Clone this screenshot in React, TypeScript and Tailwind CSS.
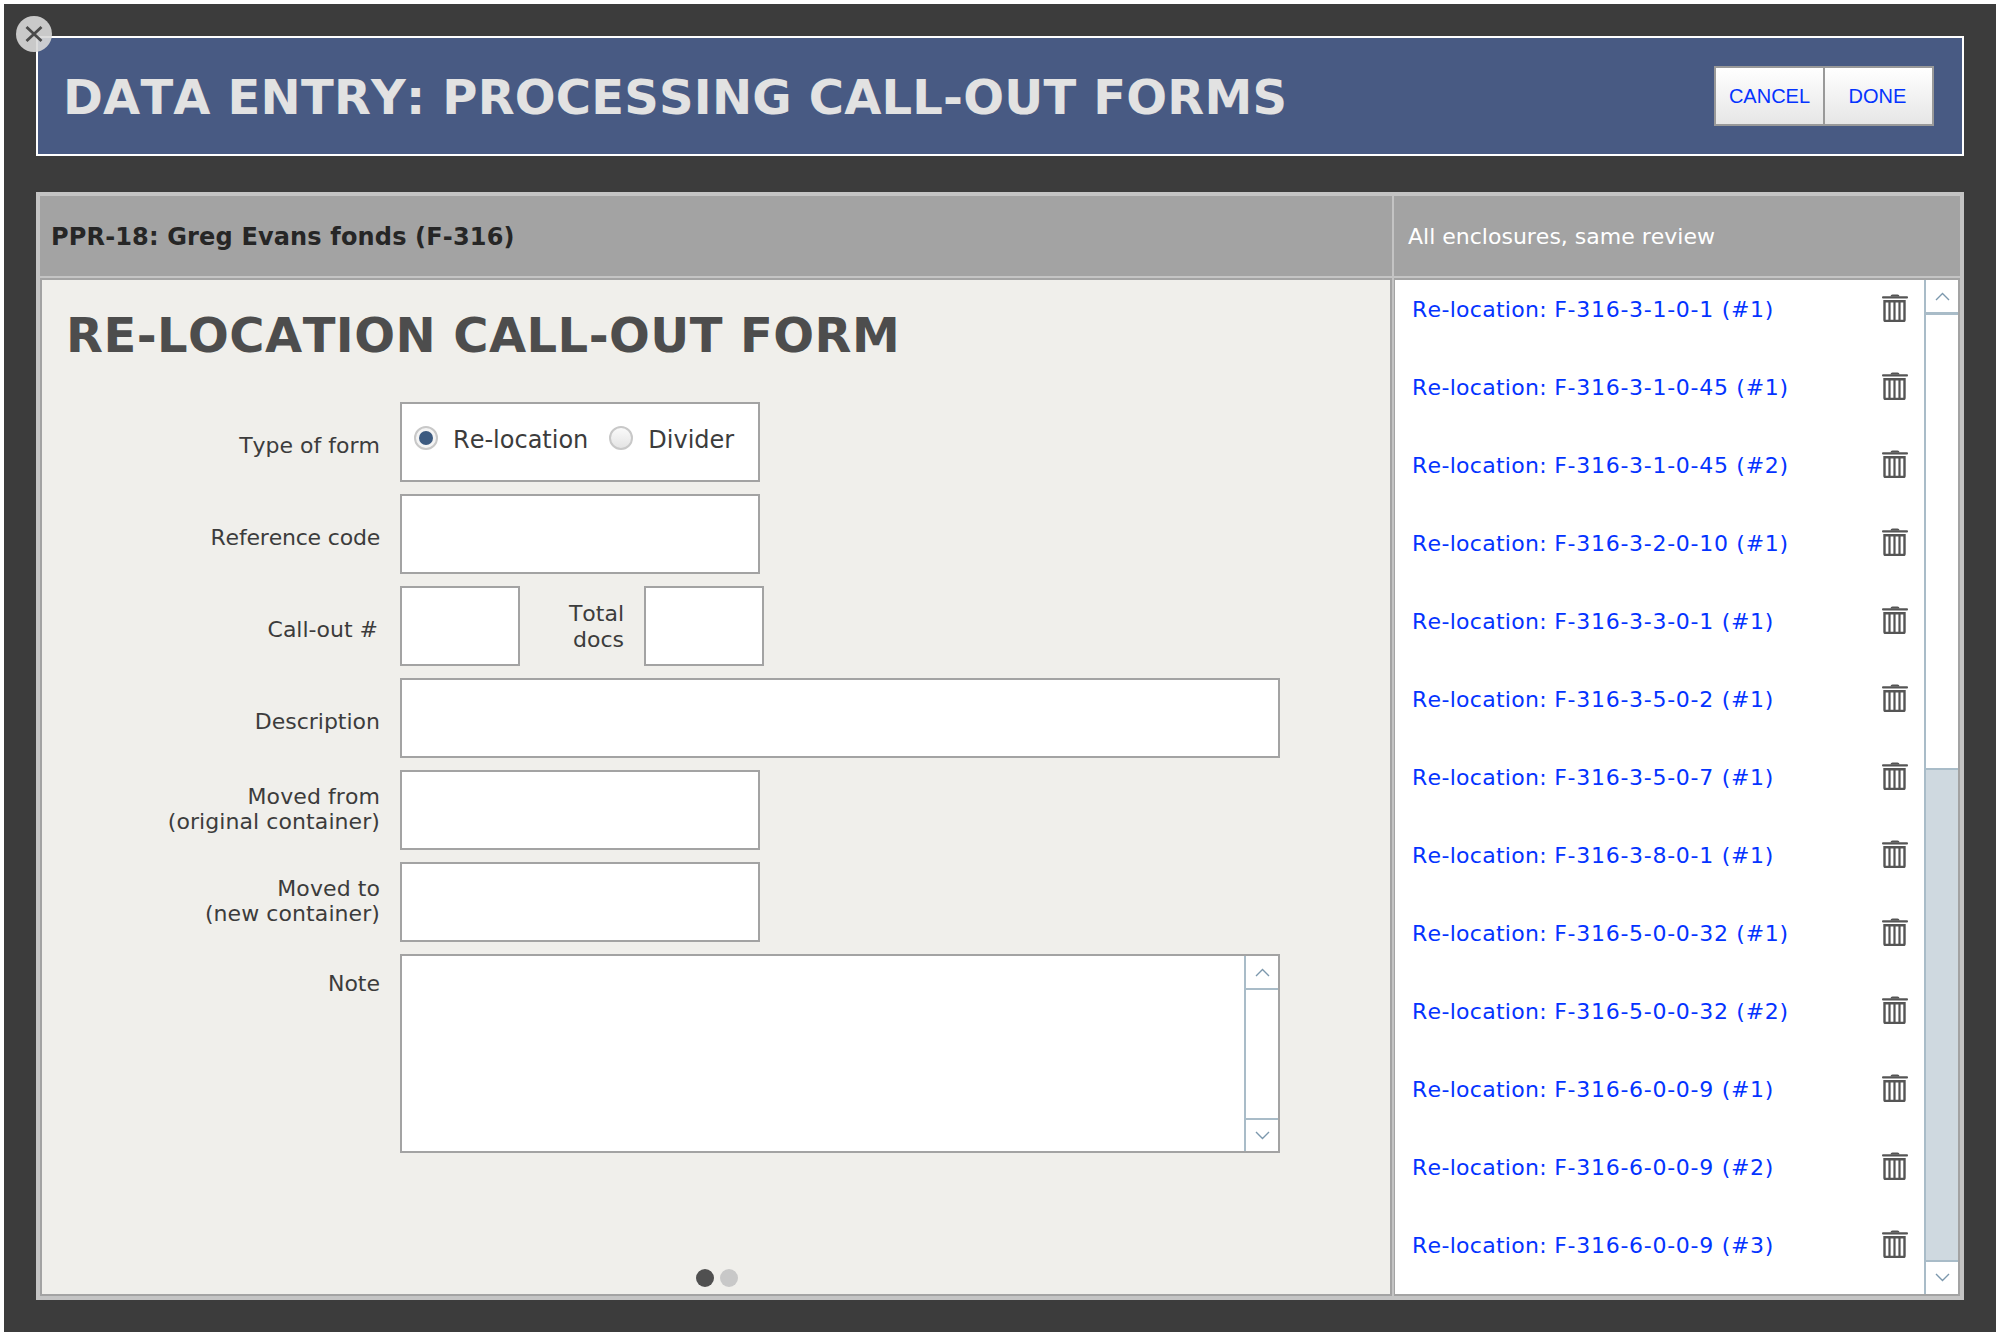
import React from "react";

const rows = [
  "F-316-3-1-0-1 (#1)", "F-316-3-1-0-45 (#1)", "F-316-3-1-0-45 (#2)", "F-316-3-2-0-10 (#1)",
  "F-316-3-3-0-1 (#1)", "F-316-3-5-0-2 (#1)", "F-316-3-5-0-7 (#1)", "F-316-3-8-0-1 (#1)",
  "F-316-5-0-0-32 (#1)", "F-316-5-0-0-32 (#2)", "F-316-6-0-0-9 (#1)", "F-316-6-0-0-9 (#2)", "F-316-6-0-0-9 (#3)",
];

function Trash() {
  return (
    <svg width="26" height="28" viewBox="0 0 26 28" className="shrink-0">
      <path d="M8.5 2.5 Q8.5 0.5 10.5 0.5 H15.5 Q17.5 0.5 17.5 2.5 Z" fill="#555" />
      <rect x="0" y="2.2" width="26" height="2.4" rx="1" fill="#555" />
      <path d="M2.5 7.2 H22.5 V26 Q22.5 27 21.5 27 H3.5 Q2.5 27 2.5 26 Z" fill="none" stroke="#555" strokeWidth="2.4" />
      <path d="M7.5 7 V27 M12.5 7 V27 M17.5 7 V27" stroke="#555" strokeWidth="2.2" fill="none" />
    </svg>
  );
}

function Chevron({ up }: { up?: boolean }) {
  return (
    <svg width="15" height="9" viewBox="0 0 15 9">
      <path d={up ? "M1 8 L7.5 1.5 L14 8" : "M1 1 L7.5 7.5 L14 1"} fill="none" stroke="#7c98ad" strokeWidth="1.4" />
    </svg>
  );
}

function Label({ children, className = "" }: { children: React.ReactNode; className?: string }) {
  return <div className={"w-[333px] pr-[20px] text-right text-[22px] leading-[25.5px] text-[#3c3c3c] " + className}>{children}</div>;
}

const box = "h-[80px] border-2 border-[#a3a3a3] bg-white";

export default function App() {
  return (
    <div className="min-h-[1336px] bg-white p-[4px] font-['DejaVu_Sans',sans-serif] [font-kerning:none]">
      <div className="relative h-[1328px] bg-[#3c3c3c] px-[32px] pt-[32px]">
        <div className="absolute left-[12px] top-[12px] z-10 flex h-[36px] w-[36px] items-center justify-center rounded-full bg-[#d8d8d8]/90">
          <svg width="18" height="18" viewBox="0 0 18 18"><path d="M1.5 2 L16.5 16 M16.5 2 L1.5 16" stroke="#4a4a4a" strokeWidth="2.8" /></svg>
        </div>

        <div className="flex h-[120px] items-center justify-between border-2 border-white bg-[#485a83] pl-[25px] pr-[28px]">
          <div className="pt-[2px] text-[48px] font-bold leading-none tracking-[0.2px] text-[#e2e2e2]">DATA ENTRY: PROCESSING CALL-OUT FORMS</div>
          <div className="flex h-[60px] border-2 border-[#999999] bg-gradient-to-b from-white to-[#e6e6e6] font-['Liberation_Sans',sans-serif] text-[20px] text-[#0433ff]">
            <div className="flex w-[107px] items-center justify-center">CANCEL</div>
            <div className="flex w-[109px] items-center justify-center border-l-2 border-[#999999] pr-[2px]">DONE</div>
          </div>
        </div>

        <div className="mt-[36px] flex h-[1108px] border-4 border-[#c4c4c4] bg-[#c4c4c4]">
          <div className="flex w-[1352px] flex-col">
            <div className="flex h-[80px] items-center bg-[#a3a3a3] pl-[11px] pt-[1px] text-[24px] font-bold tracking-[0.16px] text-[#262626]">PPR-18: Greg Evans fonds (F-316)</div>
            <div className="mt-[2px] min-h-0 flex-1 border-2 border-[#a3a3a3] bg-[#f0efeb]">
              <div className="pl-[24px] pt-[27px] text-[48px] font-bold leading-[56px] tracking-[0.46px] text-[#4d4d4d]">RE-LOCATION CALL-OUT FORM</div>
              <div className="mt-[39px] flex flex-col gap-[12px] pl-[25px]">
                <div className="flex">
                  <Label className="pt-[31px]">Type of form</Label>
                  <div className={box + " flex w-[360px] items-start gap-[21px] pl-[12px] pt-[17px] text-[24px] text-[#3c3c3c]"}>
                    <div className="flex items-center gap-[15px]">
                      <span className="-mt-[3px] flex h-[24px] w-[24px] items-center justify-center rounded-full border-2 border-[#c8c8c8] bg-[#f4f4f4]"><span className="h-[14px] w-[14px] rounded-full bg-[#3c5a80]" /></span>
                      <span className="pt-[1px]">Re-location</span>
                    </div>
                    <div className="flex items-center gap-[15px]">
                      <span className="-mt-[3px] h-[24px] w-[24px] rounded-full border-2 border-[#c8c8c8] bg-gradient-to-b from-[#fafafa] to-[#e4e4e4]" />
                      <span className="pt-[1px]">Divider</span>
                    </div>
                  </div>
                </div>
                <div className="flex items-center">
                  <Label className="pt-[8px] tracking-[-0.2px]">Reference code</Label>
                  <div className={box + " w-[360px]"} />
                </div>
                <div className="flex items-center">
                  <Label className="pt-[7px] pr-[22px]">Call-out #</Label>
                  <div className={box + " w-[120px]"} />
                  <div className="w-[104px] pt-[1px] text-right text-[22px] leading-[26px] text-[#3c3c3c]">Total<br />docs</div>
                  <div className={box + " ml-[20px] w-[120px]"} />
                </div>
                <div className="flex items-center">
                  <Label className="pt-[8px]">Description</Label>
                  <div className={box + " w-[880px]"} />
                </div>
                <div className="flex items-center">
                  <Label className="-mt-[2px] tracking-[0.08px]">Moved from<br />(original container)</Label>
                  <div className={box + " w-[360px]"} />
                </div>
                <div className="flex items-center">
                  <Label className="-mt-[2px] tracking-[0.08px]">Moved to<br />(new container)</Label>
                  <div className={box + " w-[360px]"} />
                </div>
                <div className="flex">
                  <Label className="pt-[17px]">Note</Label>
                  <div className="flex h-[199px] w-[880px] justify-end border-2 border-[#a3a3a3] bg-white">
                    <div className="flex w-[34px] flex-col border-l-2 border-[#a9bcc8]">
                      <div className="flex h-[34px] items-center justify-center border-b-2 border-[#a9bcc8]"><Chevron up /></div>
                      <div className="flex-1" />
                      <div className="flex h-[33px] items-center justify-center border-t-2 border-[#a9bcc8]"><Chevron /></div>
                    </div>
                  </div>
                </div>
              </div>
              <div className="mt-[116px] flex justify-center gap-[6px] pl-[2px]">
                <span className="h-[18px] w-[18px] rounded-full bg-[#505050]" />
                <span className="h-[18px] w-[18px] rounded-full bg-[#c8c8c8]" />
              </div>
            </div>
          </div>
          <div className="ml-[2px] flex min-w-0 flex-1 flex-col">
            <div className="flex h-[80px] items-center bg-[#a3a3a3] pl-[14px] pt-[1px] text-[22px] text-white">All enclosures, same review</div>
            <div className="mt-[2px] flex min-h-0 flex-1 border-2 border-l border-[#a3a3a3] bg-white">
              <div className="flex-1 overflow-hidden pl-[17px]">
                {rows.map((r) => (
                  <div key={r} className="flex h-[78px] items-center pb-[20px] text-[22px] text-[#0433ff]">
                    <div className="flex-1 tracking-[0.29px]">Re-location: <span className="tracking-[0.72px]">{r}</span></div>
                    <div className="mr-[16px] -mt-[2px]"><Trash /></div>
                  </div>
                ))}
              </div>
              <div className="flex w-[34px] flex-col border-l-2 border-[#a9bcc8]">
                <div className="flex h-[35px] items-center justify-center border-b-[3px] border-[#a9bcc8]"><Chevron up /></div>
                <div className="h-[453px] bg-white" />
                <div className="flex-1 border-t-2 border-[#a9bcc8] bg-[#cfd9e0]" />
                <div className="flex h-[34px] items-center justify-center border-t-2 border-[#a9bcc8] pb-[1px]"><Chevron /></div>
              </div>
            </div>
          </div>
        </div>
      </div>
    </div>
  );
}
